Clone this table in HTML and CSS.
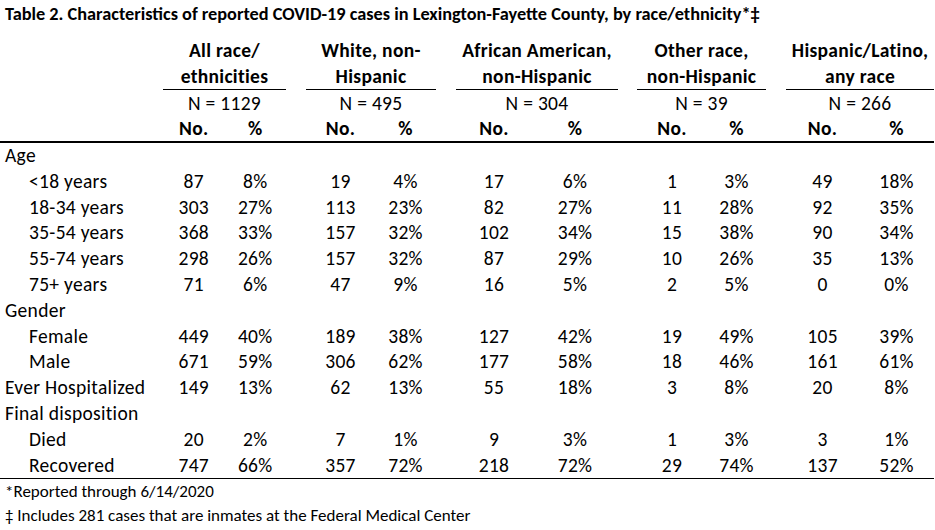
FILE: index.html
```html
<!DOCTYPE html>
<html>
<head>
<meta charset="utf-8">
<link rel="stylesheet" href="styles.css">
</head>
<body>
<div class="title">Table 2. Characteristics of reported COVID-19 cases in Lexington-Fayette County, by race/ethnicity*‡</div>
<table class="t">
<colgroup>
<col class="c-lab">
<col class="c-g1a"><col class="c-g1b"><col class="c-sp">
<col class="c-g2a"><col class="c-g2b"><col class="c-sp">
<col class="c-g3a"><col class="c-g3b"><col class="c-sp3">
<col class="c-g4a"><col class="c-g4b"><col class="c-sp">
<col class="c-g5a"><col class="c-g5b">
</colgroup>
<thead>
<tr class="h1">
<th></th><th colspan="2">All race/</th><th></th><th colspan="2">White, non-</th><th></th><th colspan="2">African American,</th><th></th><th colspan="2">Other race,</th><th></th><th colspan="2">Hispanic/Latino,</th>
</tr>
<tr class="h2">
<th></th><th colspan="2" class="ul">ethnicities</th><th></th><th colspan="2" class="ul">Hispanic</th><th></th><th colspan="2" class="ul">non-Hispanic</th><th></th><th colspan="2" class="ul">non-Hispanic</th><th></th><th colspan="2" class="ul">any race</th>
</tr>
<tr class="hn">
<td></td><td colspan="2" class="n1">N = 1129</td><td></td><td colspan="2" class="n2">N = 495</td><td></td><td colspan="2" class="n3">N = 304</td><td></td><td colspan="2">N = 39</td><td></td><td colspan="2">N = 266</td>
</tr>
<tr class="hno">
<th></th><th>No.</th><th>%</th><th></th><th>No.</th><th>%</th><th></th><th>No.</th><th>%</th><th></th><th>No.</th><th>%</th><th></th><th>No.</th><th>%</th>
</tr>
</thead>
<tbody>
<tr><td class="lab">Age</td><td></td><td></td><td></td><td></td><td></td><td></td><td></td><td></td><td></td><td></td><td></td><td></td><td></td><td></td></tr>
<tr><td class="lab sub">&lt;18 years</td><td>87</td><td>8%</td><td></td><td>19</td><td>4%</td><td></td><td>17</td><td>6%</td><td></td><td>1</td><td>3%</td><td></td><td>49</td><td>18%</td></tr>
<tr><td class="lab sub">18-34 years</td><td>303</td><td>27%</td><td></td><td>113</td><td>23%</td><td></td><td>82</td><td>27%</td><td></td><td>11</td><td>28%</td><td></td><td>92</td><td>35%</td></tr>
<tr><td class="lab sub">35-54 years</td><td>368</td><td>33%</td><td></td><td>157</td><td>32%</td><td></td><td>102</td><td>34%</td><td></td><td>15</td><td>38%</td><td></td><td>90</td><td>34%</td></tr>
<tr><td class="lab sub">55-74 years</td><td>298</td><td>26%</td><td></td><td>157</td><td>32%</td><td></td><td>87</td><td>29%</td><td></td><td>10</td><td>26%</td><td></td><td>35</td><td>13%</td></tr>
<tr><td class="lab sub">75+ years</td><td>71</td><td>6%</td><td></td><td>47</td><td>9%</td><td></td><td>16</td><td>5%</td><td></td><td>2</td><td>5%</td><td></td><td>0</td><td>0%</td></tr>
<tr><td class="lab">Gender</td><td></td><td></td><td></td><td></td><td></td><td></td><td></td><td></td><td></td><td></td><td></td><td></td><td></td><td></td></tr>
<tr><td class="lab sub">Female</td><td>449</td><td>40%</td><td></td><td>189</td><td>38%</td><td></td><td>127</td><td>42%</td><td></td><td>19</td><td>49%</td><td></td><td>105</td><td>39%</td></tr>
<tr><td class="lab sub">Male</td><td>671</td><td>59%</td><td></td><td>306</td><td>62%</td><td></td><td>177</td><td>58%</td><td></td><td>18</td><td>46%</td><td></td><td>161</td><td>61%</td></tr>
<tr><td class="lab">Ever Hospitalized</td><td>149</td><td>13%</td><td></td><td>62</td><td>13%</td><td></td><td>55</td><td>18%</td><td></td><td>3</td><td>8%</td><td></td><td>20</td><td>8%</td></tr>
<tr><td class="lab">Final disposition</td><td></td><td></td><td></td><td></td><td></td><td></td><td></td><td></td><td></td><td></td><td></td><td></td><td></td><td></td></tr>
<tr><td class="lab sub">Died</td><td>20</td><td>2%</td><td></td><td>7</td><td>1%</td><td></td><td>9</td><td>3%</td><td></td><td>1</td><td>3%</td><td></td><td>3</td><td>1%</td></tr>
<tr class="last"><td class="lab sub">Recovered</td><td>747</td><td>66%</td><td></td><td>357</td><td>72%</td><td></td><td>218</td><td>72%</td><td></td><td>29</td><td>74%</td><td></td><td>137</td><td>52%</td></tr>
</tbody>
</table>
<div class="notes">
<div class="note">*Reported through 6/14/2020</div>
<div class="note">‡ Includes 281 cases that are inmates at the Federal Medical Center</div>
</div>
</body>
</html>
```
FILE: styles.css
```css
html, body {
  margin: 0;
  padding: 0;
  background: #fff;
  color: #000;
}
body {
  font-family: Carlito, Lato, "Liberation Sans", sans-serif;
  font-size: 19.5px;
  letter-spacing: 0.3px;
}
.title {
  font-weight: bold;
  font-size: 18.3px;
  letter-spacing: 0;
  line-height: 26px;
  padding: 1px 0 0 5px;
  margin-bottom: 10px;
  white-space: nowrap;
}
.t {
  table-layout: fixed;
  width: 934px;
  border-collapse: separate;
  border-spacing: 0;
}
.c-lab { width: 163px; }
.c-g1a { width: 61.5px; }
.c-g1b { width: 61.5px; }
.c-sp { width: 20px; }
.c-sp3 { width: 19px; }
.c-g2a { width: 69px; }
.c-g2b { width: 61px; }
.c-g3a { width: 76px; }
.c-g3b { width: 86px; }
.c-g4a { width: 70px; }
.c-g4b { width: 59px; }
.c-g5a { width: 73px; }
.c-g5b { width: 75px; }
.t th, .t td {
  padding: 0;
  text-align: center;
  white-space: nowrap;
  font-weight: normal;
}
.t thead th {
  font-weight: bold;
}
.h1 th, .h2 th, .hn td {
  line-height: 26px;
}
.ul {
  border-bottom: 1px solid #000;
}
.n1 { padding-left: 13px; }
.n2 { padding-left: 10px; }
.n3 { padding-right: 10px; }
.hno th {
  line-height: 25px;
  border-bottom: 2px solid #000;
}
.t tbody td {
  line-height: 25.8px;
}
.t tbody td.lab {
  text-align: left;
  padding-left: 5px;
}
.t tbody td.sub {
  padding-left: 29px;
}
.last td {
  border-bottom: 1px solid #000;
}
.notes {
  padding-top: 1px;
  padding-left: 5px;
  font-size: 17px;
  letter-spacing: 0;
}
.note {
  line-height: 24px;
  white-space: nowrap;
}
```
